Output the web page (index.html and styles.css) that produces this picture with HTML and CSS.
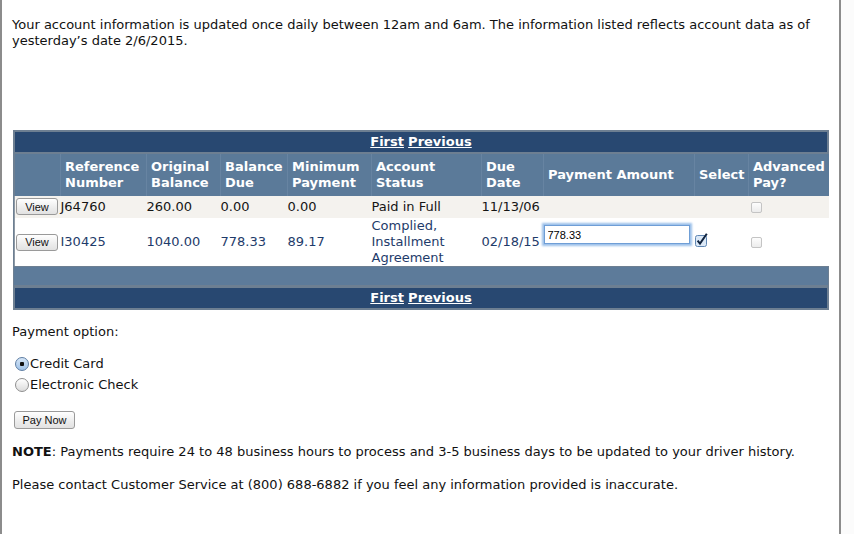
FILE: index.html
```html
<!DOCTYPE html>
<html lang="en">
<head>
  <meta charset="UTF-8" />
  <meta name="viewport" content="width=device-width, initial-scale=1.0" />
  <title>Make a Payment</title>
  <link rel="stylesheet" href="styles.css">
</head>
<body>
  <div class="page">
    <p class="clipped">Select the payment you wish to make and enter the payment amount.</p>
    <p class="info">Your account information is updated once daily between 12am and 6am. The information listed reflects account data as of yesterday’s date 2/6/2015.</p>

    <div class="accounts">
      <div class="pager"><a href="#">First</a> <a href="#">Previous</a></div>
      <table class="acct-table">
        <colgroup>
          <col style="width:46px"><col style="width:86px"><col style="width:74px"><col style="width:67px"><col style="width:84px">
          <col style="width:110px"><col style="width:62px"><col style="width:151px"><col style="width:54px"><col style="width:80px">
        </colgroup>
        <thead>
          <tr>
            <th></th>
            <th>Reference Number</th>
            <th>Original Balance</th>
            <th>Balance Due</th>
            <th>Minimum Payment</th>
            <th>Account Status</th>
            <th>Due Date</th>
            <th>Payment Amount</th>
            <th>Select</th>
            <th>Advanced Pay?</th>
          </tr>
        </thead>
        <tbody>
          <tr class="row-odd">
            <td class="view-cell"><button class="btn">View</button></td>
            <td>J64760</td>
            <td>260.00</td>
            <td>0.00</td>
            <td>0.00</td>
            <td>Paid in Full</td>
            <td>11/13/06</td>
            <td></td>
            <td></td>
            <td class="adv-cell"><input type="checkbox" class="check" disabled></td>
          </tr>
          <tr class="row-even">
            <td class="view-cell"><button class="btn">View</button></td>
            <td>I30425</td>
            <td>1040.00</td>
            <td>778.33</td>
            <td>89.17</td>
            <td>Complied, Installment Agreement</td>
            <td>02/18/15</td>
            <td class="amount-cell"><input type="text" class="amount" value="778.33"></td>
            <td class="select-cell">
              <span class="checked-box">
                <svg width="14" height="14" viewBox="0 0 14 14"><rect x="0.5" y="2.5" width="11" height="11" rx="2" fill="#dbe8f6" stroke="#5f86b3"/><path d="M2.6 7.6 L5 10.6 L11.8 0.8" fill="none" stroke="#10233f" stroke-width="2"/></svg>
              </span>
            </td>
            <td class="adv-cell"><input type="checkbox" class="check" disabled></td>
          </tr>
        </tbody>
      </table>
      <div class="foot-bar"></div>
      <div class="pager"><a href="#">First</a> <a href="#">Previous</a></div>
    </div>

    <p class="opt-label">Payment option:</p>
    <div class="options">
      <label><input type="radio" name="paytype" class="radio" checked>Credit Card</label>
      <label><input type="radio" name="paytype" class="radio">Electronic Check</label>
    </div>
    <button class="btn pay-btn">Pay Now</button>

    <p class="note"><strong>NOTE</strong>: Payments require 24 to 48 business hours to process and 3-5 business days to be updated to your driver history.</p>
    <p class="contact">Please contact Customer Service at (800) 688-6882 if you feel any information provided is inaccurate.</p>
  </div>
</body>
</html>
```
FILE: styles.css
```css
body {
  margin: 0;
  background: #fbfbfb;
  overflow: hidden;
}
.page {
  width: 827px;
  min-height: 560px;
  padding-left: 10px;
  border-left: 2px solid #8c8c8c;
  border-right: 2px solid #8c8c8c;
  background: #fff;
  font-family: "DejaVu Sans", Verdana, sans-serif;
  font-size: 13px;
  line-height: 16px;
  color: #111;
}
p {
  margin: 0;
}
.clipped {
  margin: -16px 0 17px;
}
.info {
  margin-bottom: 81px;
}
.accounts {
  width: 814px;
  margin-left: 1px;
  border: 1px solid #6d7f92;
  background: #6d7f92;
}
.pager {
  height: 20px;
  margin: 1px 1px 2px;
  background: #284871;
  text-align: center;
  line-height: 20px;
}
.pager a {
  color: #fff;
  font-weight: bold;
  text-decoration: underline;
}
.acct-table {
  width: 814px;
  border-collapse: collapse;
  table-layout: fixed;
}
.acct-table th {
  height: 32px;
  padding: 5px 2px 5px 4px;
  background: #5b7a99;
  border-left: 1px solid #6784a2;
  color: #fff;
  font-weight: bold;
  text-align: left;
  vertical-align: middle;
}
.acct-table th:first-child {
  border-left: none;
}
.acct-table td {
  padding: 2px 0 3px;
  vertical-align: middle;
  white-space: nowrap;
}
.acct-table .row-odd td {
  background: #f4f2ee;
  height: 17px;
  color: #151515;
}
.acct-table .row-even td {
  padding: 0;
  background: #fff;
  color: #1e3b6a;
  white-space: normal;
}
.acct-table td:first-child {
  border-left: 1px solid #8e9aa6;
}
.acct-table td.view-cell {
  padding-left: 1px;
}
.acct-table .row-even td.amount-cell {
  vertical-align: top;
  padding-top: 7px;
}
.acct-table td.adv-cell {
  padding-left: 2px;
}
.btn {
  font-family: "Liberation Sans", Arial, sans-serif;
  font-size: 11px;
  line-height: 14px;
  color: #111;
  padding: 1px 6px;
  border: 1px solid #9a9a9a;
  border-radius: 3px;
  background: linear-gradient(#fff, #ececec 60%, #e2e2e2);
  cursor: pointer;
}
.view-cell .btn {
  width: 42px;
  height: 17px;
  padding: 0;
  vertical-align: middle;
}
.amount {
  width: 146px;
  height: 19px;
  box-sizing: border-box;
  margin: 0;
  padding: 1px 3px;
  border: 1px solid #6f9ed6;
  box-shadow: 0 0 2px 2px #9cc0ea;
  font-family: "Liberation Sans", Arial, sans-serif;
  font-size: 11px;
  color: #000;
  outline: none;
}
.checked-box {
  display: inline-block;
  line-height: 0;
}
.check {
  appearance: none;
  width: 11px;
  height: 11px;
  margin: 0;
  border: 1px solid #c4c4c4;
  border-radius: 2px;
  background: linear-gradient(#fdfdfd, #ececec);
  vertical-align: middle;
}
.foot-bar {
  height: 18px;
  margin: 1px 0 3px;
  background: #5d7b9a;
}
.accounts .foot-bar + .pager {
  margin: 0 1px 1px;
}
.opt-label {
  margin-top: 14px;
}
.options {
  margin-top: 13px;
}
.options label {
  display: flex;
  align-items: center;
  height: 21px;
  margin-left: 3px;
}
.radio {
  appearance: none;
  width: 14px;
  height: 14px;
  margin: 0 1px 0 0;
  border: 1px solid #8f8f8f;
  border-radius: 50%;
  background: linear-gradient(#fff, #dcdcdc);
  box-sizing: border-box;
}
.radio:checked {
  border-color: #5d7da3;
  background: radial-gradient(circle, #111 0 2px, transparent 2.5px), linear-gradient(#d6e6f7, #9fc2e8);
}
.pay-btn {
  display: block;
  width: 61px;
  height: 18px;
  margin: 16px 0 0 2px;
  padding: 0;
}
.note {
  margin-top: 15px;
}
.contact {
  margin-top: 17px;
}
```
